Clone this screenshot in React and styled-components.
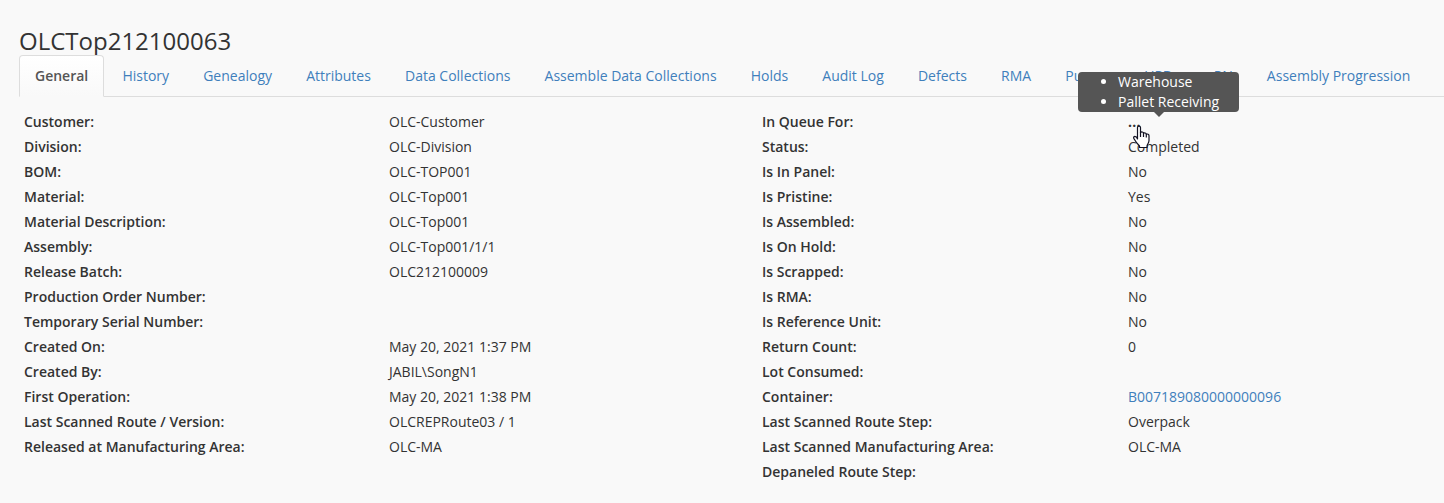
import React from "react";
import styled, { createGlobalStyle, css } from "styled-components";

const Global = createGlobalStyle`
  * { box-sizing: border-box; }
  body { margin: 0; background: #f9f9f9; color: #333; font: 400 14px/20px "Open Sans", sans-serif; overflow: hidden; }
`;
const Page = styled.main`
  width: 1444px;
  height: 503px;
  padding: 27px 0 0 19px;
  overflow: hidden;
`;
const Title = styled.h1`
  margin: 0 0 1px;
  font-size: 24px;
  font-weight: 400;
  line-height: 27px;
`;
const Tabs = styled.nav`
  display: flex;
  height: 42px;
  border-bottom: 1px solid #ddd;
`;
const Tab = styled.a`
  flex: none;
  height: 42px;
  margin-right: 2.12px;
  padding: 10px 15px;
  border: 1px solid transparent;
  border-radius: 4px 4px 0 0;
  color: #3f7fbc;
  white-space: nowrap;
  ${(p) => p.$active && css`
    color: #555;
    font-weight: 600;
    background: linear-gradient(#fff, #f9f9f9);
    border-color: #ddd;
    border-bottom-color: #f9f9f9;
  `}
`;
const Details = styled.section`
  display: grid;
  grid-template-columns: 738px 1fr;
  padding: 12px 0 0 5px;
`;
const List = styled.dl`
  margin: 0;
`;
const Row = styled.div`
  display: grid;
  grid-template-columns: ${(p) => p.$label}px 1fr;
  height: 25px;
  line-height: 25px;
`;
const Label = styled.dt`
  font-weight: 600;
`;
const Value = styled.dd`
  margin: 0;
  color: ${(p) => (p.$link ? "#3f7fbc" : "inherit")};
`;
const Queue = styled.span`
  position: relative;
`;
const Dots = styled.span`
  font-weight: 700;
  letter-spacing: 0.2px;
`;
const Tooltip = styled.div`
  position: absolute;
  left: -50px;
  bottom: 19px;
  width: 161px;
  height: 40px;
  border-radius: 4px;
  background: #555;
  color: #fff;
  line-height: 20px;
  &::after {
    content: "";
    position: absolute;
    top: 100%;
    left: 76px;
    border: 5px solid transparent;
    border-top-color: #555;
    border-bottom: 0;
  }
`;
const TipList = styled.ul`
  margin: 0;
  padding: 0 0 0 40px;
`;
const Pointer = styled.svg`
  position: absolute;
  left: 4px;
  top: 13px;
  z-index: 2;
`;

const tabs = ["General", "History", "Genealogy", "Attributes", "Data Collections", "Assemble Data Collections", "Holds", "Audit Log", "Defects", "RMA", "Purges", "UPDs", "PN", "Assembly Progression"];
const left = [
  ["Customer:", "OLC-Customer"], ["Division:", "OLC-Division"], ["BOM:", "OLC-TOP001"],
  ["Material:", "OLC-Top001"], ["Material Description:", "OLC-Top001"], ["Assembly:", "OLC-Top001/1/1"],
  ["Release Batch:", "OLC212100009"], ["Production Order Number:", ""], ["Temporary Serial Number:", ""],
  ["Created On:", "May 20, 2021 1:37 PM"], ["Created By:", "JABIL\\SongN1"], ["First Operation:", "May 20, 2021 1:38 PM"],
  ["Last Scanned Route / Version:", "OLCREPRoute03 / 1"], ["Released at Manufacturing Area:", "OLC-MA"],
];
const right = [
  ["Status:", "Completed"], ["Is In Panel:", "No"], ["Is Pristine:", "Yes"], ["Is Assembled:", "No"],
  ["Is On Hold:", "No"], ["Is Scrapped:", "No"], ["Is RMA:", "No"], ["Is Reference Unit:", "No"],
  ["Return Count:", "0"], ["Lot Consumed:", ""], ["Container:", "B007189080000000096", true],
  ["Last Scanned Route Step:", "Overpack"], ["Last Scanned Manufacturing Area:", "OLC-MA"], ["Depaneled Route Step:", ""],
];

const Fields = ({ rows, label }) => rows.map(([name, value, link]) => (
  <Row key={name} $label={label}><Label>{name}</Label><Value $link={link}>{value}</Value></Row>
));

const Hand = () => (
  <Pointer width="18" height="24" viewBox="0 0 18 24" aria-hidden="true">
    <path d="M5.500 14V2.500C5.500.6 8.500.6 8.500 2.500V7.500C9.500 6.500 11.300 7 11.500 8.200 12.500 7.500 14 8 14.300 9.200 15.500 8.600 17 9.400 17 10.800V15.500C17 18 15 19.500 15 21V22.500H7.500V21C6 19.500 4 17.500 2.500 14.500 1 13 1.500 11.500 2.800 11.300 4 11.300 5 12.500 5.500 14Z" fill="#fff" stroke="#111122" strokeWidth="1.2" strokeLinejoin="round" />
    <path d="M8.500 7v5M11.500 8v4M14.300 9v3.500" fill="none" stroke="#111122" strokeWidth="1.2" />
  </Pointer>
);

export default function App() {
  return (
    <Page>
      <Global />
      <Title>OLCTop212100063</Title>
      <Tabs>{tabs.map((t, i) => <Tab key={t} $active={i === 0}>{t}</Tab>)}</Tabs>
      <Details>
        <List><Fields rows={left} label={365} /></List>
        <List>
          <Row $label={366}>
            <Label>In Queue For:</Label>
            <Value>
              <Queue>
                <Dots>...</Dots>
                <Tooltip role="tooltip"><TipList><li>Warehouse</li><li>Pallet Receiving</li></TipList></Tooltip>
                <Hand />
              </Queue>
            </Value>
          </Row>
          <Fields rows={right} label={366} />
        </List>
      </Details>
    </Page>
  );
}
